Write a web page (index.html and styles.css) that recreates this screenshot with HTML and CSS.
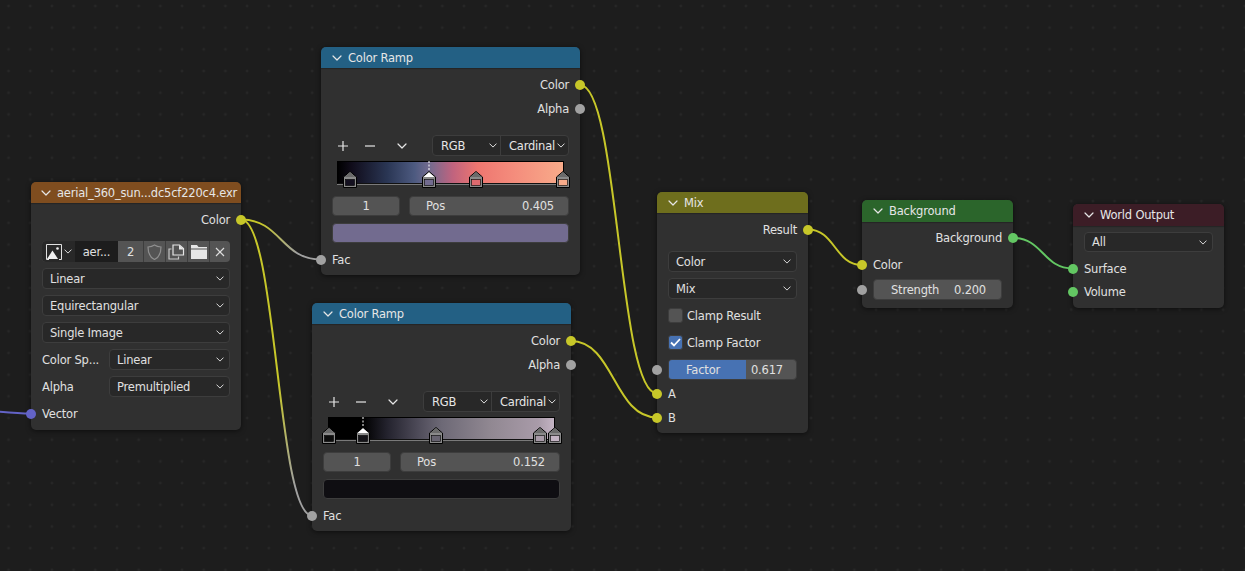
FILE: index.html
```html
<!DOCTYPE html>
<html lang="en">

<head>
    <meta charset="UTF-8">
    <meta name="viewport" content="width=device-width, initial-scale=1.0">
    <title>World nodes</title>
    <link rel="stylesheet" href="styles.css">
</head>

<body>
    <svg class="sprites" width="0" height="0">
        <symbol id="chev" viewBox="0 0 10 6">
            <path d="M1 1l4 4 4-4" fill="none" stroke="currentColor" stroke-width="1.2" stroke-linecap="round" stroke-linejoin="round" />
        </symbol>
        <symbol id="handle" viewBox="0 0 14 17" overflow="visible">
            <path d="M7 .5L13.5 6v10.500H.5V6z" fill="#8a8a8a" stroke="#000" />
            <path d="M7 1.200L12.500 6H1.500z" fill="#6a6a6a" />
        </symbol>
        <symbol id="handle-on" viewBox="0 0 14 17" overflow="visible">
            <path d="M7 .5L13.5 6v10.500H.5V6z" fill="#8a8a8a" stroke="#000" />
            <path d="M7 1.200L12.500 6H1.500z" fill="#fff" />
        </symbol>
    </svg>

    <div class="canvas">
        <svg class="wires" width="1245" height="571">
            <defs>
                <linearGradient id="yellowGrey" gradientUnits="userSpaceOnUse" x1="241" y1="0" x2="321" y2="0">
                    <stop offset="0.25" stop-color="#c7c729" />
                    <stop offset="0.7" stop-color="#a1a1a1" />
                </linearGradient>
                <linearGradient id="yellowGrey2" gradientUnits="userSpaceOnUse" x1="0" y1="219" x2="0" y2="516">
                    <stop offset="0.55" stop-color="#c7c729" />
                    <stop offset="0.9" stop-color="#a1a1a1" />
                </linearGradient>
            </defs>
            <path class="wire" stroke="#6363c7" d="M-40 409C-15 409 5 413.5 31 413.5" />
            <path class="wire" stroke="url(#yellowGrey)" d="M241 219.5C281 219.5 281 259.5 321 259.5" />
            <path class="wire" stroke="url(#yellowGrey2)" d="M241 219.5C277 219.5 277 515.5 312 515.5" />
            <path class="wire" stroke="#c7c729" d="M580 85C619 85 618 393.5 657 393.5" />
            <path class="wire" stroke="#c7c729" d="M571 341C614 341 614 417.5 657 417.5" />
            <path class="wire" stroke="#c7c729" d="M808 229.5C835 229.5 835 265 862 265" />
            <path class="wire" stroke="#63c763" d="M1013 238C1043 238 1043 268.5 1073 268.5" />
        </svg>

        <!-- image texture -->
        <div class="node node-image">
            <div class="node-head head-image">
                <svg class="head-chev"><use href="#chev" /></svg>
                <span>aerial_360_sun...dc5cf220c4.exr</span>
            </div>
            <div class="node-body">
                <div class="row row-out"><span class="socket out yellow"></span>Color</div>
                <div class="toolbar">
                    <div class="tool tool-pick">
                        <svg width="16" height="16" viewBox="0 0 16 16">
                            <path d="M3 .5H.5v15H3M13 .5h2.500v15H13M3 .5h10" fill="none" stroke="#e0e0e0" />
                            <path d="M1 15L6.500 6.500 12 15z" fill="#f0f0f0" />
                            <circle cx="11.500" cy="4.500" r="1.300" fill="#f0f0f0" />
                        </svg>
                        <svg class="chev-small"><use href="#chev" /></svg>
                    </div>
                    <div class="tool tool-name">aer...</div>
                    <div class="tool tool-count">2</div>
                    <div class="tool tool-icon">
                        <svg width="15" height="16" viewBox="0 0 15 16">
                            <path d="M7.500 1C5.500 2.300 3.500 2.800 1 3c0 5 1 10 6.500 12.500C13 13 14 8 14 3c-2.500-.2-4.500-.7-6.500-2z" fill="none" stroke="#8f8f8f" stroke-width="1.200" />
                        </svg>
                    </div>
                    <div class="tool tool-icon">
                        <svg width="17" height="16" viewBox="0 0 17 16">
                            <path d="M3.500 5H1v10h9.500v-2.500" fill="none" stroke="#c8c8c8" stroke-width="1.200" />
                            <path d="M5 1h6.500L15.500 4.500V11H5z" fill="none" stroke="#e6e6e6" stroke-width="1.200" />
                            <path d="M11 1l5 4.500h-5z" fill="#e6e6e6" />
                        </svg>
                    </div>
                    <div class="tool tool-icon">
                        <svg width="16" height="14" viewBox="0 0 16 14">
                            <path d="M0 0h6l1.500 2H16v1.500H0z" fill="#e6e6e6" />
                            <path d="M0 4.500h16V14H0z" fill="#e6e6e6" />
                        </svg>
                    </div>
                    <div class="tool tool-icon tool-last">
                        <svg width="10" height="10" viewBox="0 0 10 10">
                            <path d="M1 1l8 8M9 1l-8 8" stroke="#dcdcdc" stroke-width="1.200" />
                        </svg>
                    </div>
                </div>
                <div class="select mt6">Linear<svg class="chev-small"><use href="#chev" /></svg></div>
                <div class="select mt6">Equirectangular<svg class="chev-small"><use href="#chev" /></svg></div>
                <div class="select mt6">Single Image<svg class="chev-small"><use href="#chev" /></svg></div>
                <div class="prop mt6"><label>Color Sp...</label>
                    <div class="select">Linear<svg class="chev-small"><use href="#chev" /></svg></div>
                </div>
                <div class="prop mt6"><label>Alpha</label>
                    <div class="select">Premultiplied<svg class="chev-small"><use href="#chev" /></svg></div>
                </div>
                <div class="row row-vector"><span class="socket in purple"></span>Vector</div>
            </div>
        </div>

        <!-- first ramp -->
        <div class="node node-ramp ramp-a">
            <div class="node-head head-converter">
                <svg class="head-chev"><use href="#chev" /></svg>
                <span>Color Ramp</span>
            </div>
            <div class="node-body">
                <div class="row row-out"><span class="socket out yellow"></span>Color</div>
                <div class="row row-out"><span class="socket out grey"></span>Alpha</div>
                <div class="ramp-tools">
                    <span class="ramp-btn">
                        <svg width="12" height="12" viewBox="0 0 12 12"><path d="M6 1v10M1 6h10" stroke="#e6e6e6" stroke-width="1.200" /></svg>
                    </span>
                    <span class="ramp-btn">
                        <svg width="12" height="12" viewBox="0 0 12 12"><path d="M1 6h10" stroke="#e6e6e6" stroke-width="1.200" /></svg>
                    </span>
                    <span class="ramp-btn"><svg class="chev-menu"><use href="#chev" /></svg></span>
                    <div class="seg">
                        <div class="seg-item seg-rgb">RGB<svg class="chev-small"><use href="#chev" /></svg></div>
                        <div class="seg-item seg-mode">Cardinal<svg class="chev-small"><use href="#chev" /></svg></div>
                    </div>
                </div>
                <div class="ramp grad-a">
                    <svg class="ramp-handles" width="226" height="27">
                        <g transform="translate(6 10)">
                            <use href="#handle" width="14" height="17" />
                            <rect x="2.500" y="8.500" width="9" height="6" fill="#141020" stroke="#000" stroke-width=".6" />
                        </g>
                        <g transform="translate(85 10)">
                            <path d="M7 -10V0" stroke="#fff" stroke-dasharray="2 1.500" />
                            <use href="#handle-on" width="14" height="17" />
                            <rect x="2.500" y="8.500" width="9" height="6" fill="#726b8f" stroke="#000" stroke-width=".6" />
                        </g>
                        <g transform="translate(132 10)">
                            <use href="#handle" width="14" height="17" />
                            <rect x="2.500" y="8.500" width="9" height="6" fill="#dd6a6e" stroke="#000" stroke-width=".6" />
                        </g>
                        <g transform="translate(219 10)">
                            <use href="#handle" width="14" height="17" />
                            <rect x="2.500" y="8.500" width="9" height="6" fill="#f8ab8a" stroke="#000" stroke-width=".6" />
                        </g>
                    </svg>
                </div>
                <div class="ramp-fields">
                    <div class="num num-index">1</div>
                    <div class="num num-pos"><span>Pos</span><span>0.405</span></div>
                </div>
                <div class="swatch swatch-a"></div>
                <div class="row row-fac"><span class="socket in grey"></span>Fac</div>
            </div>
        </div>

        <!-- second ramp -->
        <div class="node node-ramp ramp-b">
            <div class="node-head head-converter">
                <svg class="head-chev"><use href="#chev" /></svg>
                <span>Color Ramp</span>
            </div>
            <div class="node-body">
                <div class="row row-out"><span class="socket out yellow"></span>Color</div>
                <div class="row row-out"><span class="socket out grey"></span>Alpha</div>
                <div class="ramp-tools">
                    <span class="ramp-btn">
                        <svg width="12" height="12" viewBox="0 0 12 12"><path d="M6 1v10M1 6h10" stroke="#e6e6e6" stroke-width="1.200" /></svg>
                    </span>
                    <span class="ramp-btn">
                        <svg width="12" height="12" viewBox="0 0 12 12"><path d="M1 6h10" stroke="#e6e6e6" stroke-width="1.200" /></svg>
                    </span>
                    <span class="ramp-btn"><svg class="chev-menu"><use href="#chev" /></svg></span>
                    <div class="seg">
                        <div class="seg-item seg-rgb">RGB<svg class="chev-small"><use href="#chev" /></svg></div>
                        <div class="seg-item seg-mode">Cardinal<svg class="chev-small"><use href="#chev" /></svg></div>
                    </div>
                </div>
                <div class="ramp grad-b">
                    <svg class="ramp-handles" width="226" height="27">
                        <g transform="translate(-6 10)">
                            <use href="#handle" width="14" height="17" />
                            <rect x="2.500" y="8.500" width="9" height="6" fill="#0c0c0c" stroke="#000" stroke-width=".6" />
                        </g>
                        <g transform="translate(28 10)">
                            <path d="M7 -10V0" stroke="#fff" stroke-dasharray="2 1.500" />
                            <use href="#handle-on" width="14" height="17" />
                            <rect x="2.500" y="8.500" width="9" height="6" fill="#141318" stroke="#000" stroke-width=".6" />
                        </g>
                        <g transform="translate(101 10)">
                            <use href="#handle" width="14" height="17" />
                            <rect x="2.500" y="8.500" width="9" height="6" fill="#676370" stroke="#000" stroke-width=".6" />
                        </g>
                        <g transform="translate(205 10)">
                            <use href="#handle" width="14" height="17" />
                            <rect x="2.500" y="8.500" width="9" height="6" fill="#a99ba9" stroke="#000" stroke-width=".6" />
                        </g>
                        <g transform="translate(220 10)">
                            <use href="#handle" width="14" height="17" />
                            <rect x="2.500" y="8.500" width="9" height="6" fill="#c4b4c4" stroke="#000" stroke-width=".6" />
                        </g>
                    </svg>
                </div>
                <div class="ramp-fields">
                    <div class="num num-index">1</div>
                    <div class="num num-pos"><span>Pos</span><span>0.152</span></div>
                </div>
                <div class="swatch swatch-b"></div>
                <div class="row row-fac"><span class="socket in grey"></span>Fac</div>
            </div>
        </div>

        <!-- mix -->
        <div class="node node-mix">
            <div class="node-head head-mix">
                <svg class="head-chev"><use href="#chev" /></svg>
                <span>Mix</span>
            </div>
            <div class="node-body">
                <div class="row row-out row-result"><span class="socket out yellow"></span>Result</div>
                <div class="select mt-mix">Color<svg class="chev-small"><use href="#chev" /></svg></div>
                <div class="select mt6">Mix<svg class="chev-small"><use href="#chev" /></svg></div>
                <div class="check check-first"><span class="box"></span>Clamp Result</div>
                <div class="check check-second">
                    <span class="box box-on">
                        <svg width="11" height="9" viewBox="0 0 11 9"><path d="M1 4.500L4 7.500 10 1" fill="none" stroke="#fff" stroke-width="1.800" /></svg>
                    </span>Clamp Factor
                </div>
                <div class="slider">
                    <span class="socket in grey"></span>
                    <span class="slider-fill">Factor</span>
                    <span class="slider-rest">0.617</span>
                </div>
                <div class="row row-a"><span class="socket in yellow"></span>A</div>
                <div class="row"><span class="socket in yellow"></span>B</div>
            </div>
        </div>

        <!-- background -->
        <div class="node node-bg">
            <div class="node-head head-tall head-shader">
                <svg class="head-chev"><use href="#chev" /></svg>
                <span>Background</span>
            </div>
            <div class="node-body">
                <div class="row row-out"><span class="socket out green"></span>Background</div>
                <div class="row row-bgcolor"><span class="socket in yellow"></span>Color</div>
                <div class="num num-strength">
                    <span class="socket in grey"></span>
                    <span>Strength</span><span>0.200</span>
                </div>
            </div>
        </div>

        <!-- output -->
        <div class="node node-out">
            <div class="node-head head-tall head-output">
                <svg class="head-chev"><use href="#chev" /></svg>
                <span>World Output</span>
            </div>
            <div class="node-body">
                <div class="select select-all">All<svg class="chev-small"><use href="#chev" /></svg></div>
                <div class="row row-surface"><span class="socket in green"></span>Surface</div>
                <div class="row row-volume"><span class="socket in green"></span>Volume</div>
            </div>
        </div>
    </div>
</body>

</html>
```

FILE: styles.css
```css
body {
    margin: 0;
    background-color: #1d1d1d;
    font-family: 'DejaVu Sans', sans-serif;
    font-size: 11.5px;
    letter-spacing: -0.2px;
    color: #e0e0e0;
    overflow: hidden;
}

.sprites {
    position: absolute;
}

.canvas {
    position: relative;
    width: 1245px;
    height: 571px;
    overflow: hidden;
    background-image: radial-gradient(circle, #272727 1.2px, transparent 1.7px);
    background-size: 21.7px 21.7px;
    background-position: -2.3px -4.9px;
}

.wires {
    position: absolute;
    left: 0;
    top: 0;
}

.wire {
    fill: none;
    stroke-width: 2;
}

/* nodes */
.node {
    position: absolute;
    background: #303030;
    border-radius: 5px;
    box-shadow: 0 1px 5px rgba(0, 0, 0, 0.55);
}

.node-image {
    left: 31px;
    top: 182px;
    width: 210px;
}

.node-ramp {
    width: 259px;
}

.ramp-a {
    left: 321px;
    top: 47px;
}

.ramp-b {
    left: 312px;
    top: 303px;
}

.node-mix {
    left: 657px;
    top: 192px;
    width: 151px;
}

.node-bg {
    left: 862px;
    top: 200px;
    width: 151px;
}

.node-out {
    left: 1073px;
    top: 204px;
    width: 151px;
}

.node-head {
    display: flex;
    align-items: center;
    height: 21px;
    padding-left: 11px;
    border-radius: 5px 5px 0 0;
    box-shadow: 0 1px 1px rgba(0, 0, 0, 0.25);
    color: #e6e6e6;
    white-space: nowrap;
}

.head-tall {
    height: 22px;
}

.head-image {
    background: #7f4d1f;
    padding-left: 10px;
}

.head-converter {
    background: #236084;
}

.head-mix {
    background: #6e6e1d;
}

.head-shader {
    background: #2b652b;
}

.head-output {
    background: #3c1d26;
}

.head-chev {
    width: 10px;
    height: 6px;
    margin-right: 6px;
    flex: none;
}

.node-body {
    display: flex;
    flex-direction: column;
    padding: 5px 11px 4px;
}

.mt6 {
    margin-top: 6px;
}

/* socket rows */
.row {
    position: relative;
    display: flex;
    align-items: center;
    height: 24px;
    flex: none;
}

.row-out {
    justify-content: flex-end;
}

.socket {
    position: absolute;
    top: 50%;
    width: 10px;
    height: 10px;
    margin-top: -5px;
    border-radius: 50%;
}

.socket.out {
    right: -16px;
}

.socket.in {
    left: -16px;
}

.yellow {
    background: #c7c729;
}

.grey {
    background: #a1a1a1;
}

.purple {
    background: #6363c7;
}

.green {
    background: #63c763;
}

/* dropdowns */
.select {
    position: relative;
    display: flex;
    align-items: center;
    justify-content: space-between;
    flex: 1 0 auto;
    box-sizing: border-box;
    height: 21px;
    padding: 0 5px 0 7px;
    background: #282828;
    border: 1px solid #3d3d3d;
    border-radius: 4px;
}

.chev-small {
    width: 8px;
    height: 5px;
    flex: none;
}

.prop {
    display: flex;
    align-items: center;
    height: 21px;
}

.prop label {
    width: 67px;
    flex: none;
}

/* image toolbar */
.toolbar {
    display: flex;
    height: 21px;
    margin-top: 9px;
    background: #545454;
    border-radius: 4px;
    overflow: hidden;
}

.tool {
    display: flex;
    align-items: center;
    justify-content: center;
    box-sizing: border-box;
    border-right: 1px solid #3d3d3d;
    flex: none;
}

.tool-pick {
    width: 33px;
    gap: 2px;
    padding-left: 1px;
    background: #282828;
    border-right: 0;
}

.tool-name {
    width: 43px;
    background: #1d1d1d;
    border-right: 0;
}

.tool-count {
    width: 26px;
}

.tool-icon {
    width: 22px;
}

.tool-last {
    border-right: 0;
    flex: 1;
}

.row-vector {
    margin-top: 5px;
}

/* ramp */
.ramp-tools {
    display: flex;
    align-items: center;
    height: 21px;
    margin-top: 14px;
    color: #e6e6e6;
}

.ramp-btn {
    display: flex;
    justify-content: center;
    width: 27px;
}

.ramp-btn:first-child {
    margin-left: -3px;
}

.ramp-btn:nth-child(3) {
    margin-left: 5px;
}

.chev-menu {
    width: 10px;
    height: 6px;
}

.seg {
    display: flex;
    margin-left: auto;
    width: 137px;
    height: 21px;
    box-sizing: border-box;
    background: #282828;
    border: 1px solid #3d3d3d;
    border-radius: 4px;
}

.seg-item {
    display: flex;
    align-items: center;
    justify-content: space-between;
    box-sizing: border-box;
}

.seg-rgb {
    width: 68px;
    padding: 0 3px 0 8px;
    border-right: 1px solid #3d3d3d;
}

.seg-mode {
    flex: 1;
    padding: 0 3px 0 8px;
}

.ramp {
    position: relative;
    box-sizing: border-box;
    height: 23px;
    margin: 5px 5px 0;
    border: 1px solid #000;
    border-bottom-color: #111;
}

.ramp::after {
    content: "";
    position: absolute;
    left: -1px;
    right: -1px;
    bottom: -2px;
    height: 1px;
    background: #7a7a7a;
}

.grad-a {
    background: linear-gradient(90deg, #000 0, #100c1a 6%, #2a3654 22%, #4d5a80 34%, #726b8f 40.5%, #c0637e 51%, #ee7670 62%, #f48c7c 78%, #f8ab8a 100%);
}

.grad-b {
    background: linear-gradient(90deg, #000 0, #000 15.2%, #24232e 26%, #4f4c5a 40%, #6d6976 50%, #918892 72%, #a99ba9 93%, #c4b4c4 100%);
}

.ramp-handles {
    position: absolute;
    z-index: 1;
    left: -1px;
    top: -1px;
    overflow: visible;
}

.ramp-fields {
    display: flex;
    gap: 9px;
    margin-top: 12px;
}

.num {
    position: relative;
    display: flex;
    align-items: center;
    justify-content: space-between;
    box-sizing: border-box;
    height: 20px;
    background: #545454;
    border: 1px solid #3d3d3d;
    border-radius: 4px;
}

.num-index {
    width: 68px;
    justify-content: center;
}

.num-pos {
    flex: 1;
    padding: 0 14px 0 16px;
}

.swatch {
    height: 20px;
    margin-top: 7px;
    box-sizing: border-box;
    border: 1px solid #3d3d3d;
    border-radius: 4px;
}

.swatch-a {
    background: #726b8f;
}

.swatch-b {
    background: #0f0e12;
}

.row-fac {
    margin-top: 5px;
}

.node-ramp .node-body {
    padding-bottom: 3px;
}

/* mix */
.row-result {
    height: 23px;
}

.mt-mix {
    margin-top: 10px;
}

.node-mix .select {
    flex: none;
}

.check {
    display: flex;
    align-items: center;
    gap: 4px;
    height: 15px;
}

.check-first {
    margin-top: 9px;
}

.check-second {
    margin-top: 12px;
}

.box {
    display: flex;
    align-items: center;
    justify-content: center;
    box-sizing: border-box;
    width: 15px;
    height: 15px;
    background: #545454;
    border: 1px solid #3d3d3d;
    border-radius: 3px;
}

.box-on {
    background: #4772b3;
}

.slider {
    position: relative;
    display: flex;
    height: 21px;
    margin-top: 9px;
    background: #545454;
    border: 1px solid #3d3d3d;
    border-radius: 4px;
    box-sizing: border-box;
    line-height: 20px;
}

.slider .socket.in {
    left: -17px;
}

.slider-fill {
    width: 77px;
    padding-left: 17px;
    box-sizing: border-box;
    background: #4772b3;
    border-radius: 3px 0 0 3px;
}

.slider-rest {
    padding-left: 5px;
}

.row-a {
    margin-top: 2px;
}

.node-mix .node-body {
    padding-bottom: 3px;
}

/* background and output */
.node-bg .node-body {
    padding-top: 4px;
    padding-bottom: 8px;
}

.row-bgcolor {
    margin-top: 3px;
}

.num-strength {
    height: 21px;
    margin-top: 2px;
    padding: 0 15px 0 17px;
}

.num-strength .socket.in {
    left: -17px;
}

.node-out .node-body {
    padding-top: 6px;
    padding-bottom: 5px;
}

.node-out .select {
    flex: none;
}

.select-all {
    height: 20px;
}

.row-surface {
    margin-top: 5px;
}

.row-volume {
    height: 22px;
}
```
